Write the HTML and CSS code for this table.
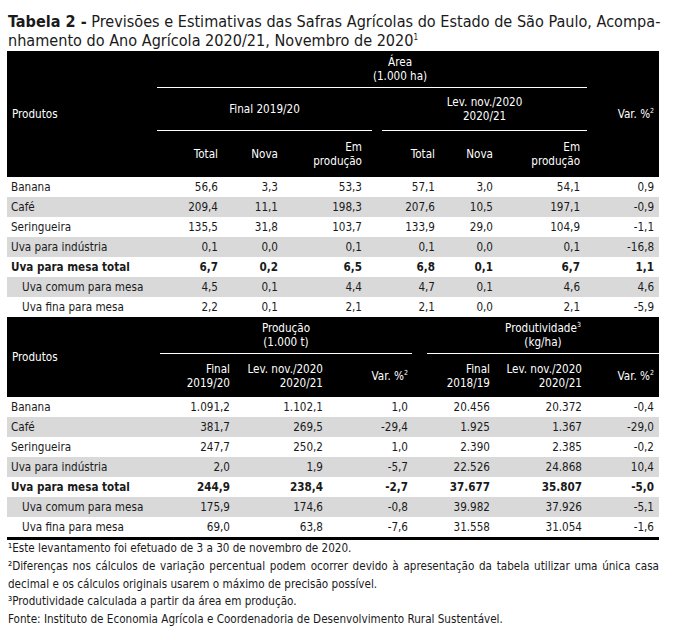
FILE: index.html
```html
<!DOCTYPE html>
<html lang="pt-BR">
<head>
<meta charset="utf-8">
<title>Tabela 2</title>
<link rel="stylesheet" href="styles.css">
</head>
<body>
<div class="page">
  <h1 class="title"><b>Tabela 2 -</b> Previsões e Estimativas das Safras Agrícolas do Estado de São Paulo, Acompa-<br>nhamento do Ano Agrícola 2020/21, Novembro de 2020<sup>1</sup></h1>

  <table class="tbl t1">
    <colgroup>
      <col class="w150"><col class="w65"><col class="w60"><col class="w90"><col class="w10"><col class="w57"><col class="w58"><col class="w90"><col class="w72">
    </colgroup>
    <thead>
      <tr class="h1">
        <th rowspan="3" class="prod">Produtos</th>
        <th colspan="7" class="grp area">Área<br>(1.000 ha)</th>
        <th rowspan="3" class="r var">Var. %<sup>2</sup></th>
      </tr>
      <tr class="h2">
        <th colspan="3" class="grp">Final 2019/20</th>
        <th class="gap"></th>
        <th colspan="3" class="grp">Lev. nov./2020<br>2020/21</th>
      </tr>
      <tr class="h3">
        <th class="r">Total</th>
        <th class="r">Nova</th>
        <th class="r p10">Em<br>produção</th>
        <th class="gap"></th>
        <th class="r">Total</th>
        <th class="r">Nova</th>
        <th class="r p7">Em<br>produção</th>
      </tr>
    </thead>
    <tbody>
      <tr><td>Banana</td><td class="r">56,6</td><td class="r">3,3</td><td class="r p10">53,3</td><td></td><td class="r">57,1</td><td class="r">3,0</td><td class="r p7">54,1</td><td class="r var">0,9</td></tr>
      <tr class="alt"><td>Café</td><td class="r">209,4</td><td class="r">11,1</td><td class="r p10">198,3</td><td></td><td class="r">207,6</td><td class="r">10,5</td><td class="r p7">197,1</td><td class="r var">-0,9</td></tr>
      <tr><td>Seringueira</td><td class="r">135,5</td><td class="r">31,8</td><td class="r p10">103,7</td><td></td><td class="r">133,9</td><td class="r">29,0</td><td class="r p7">104,9</td><td class="r var">-1,1</td></tr>
      <tr class="alt"><td>Uva para indústria</td><td class="r">0,1</td><td class="r">0,0</td><td class="r p10">0,1</td><td></td><td class="r">0,1</td><td class="r">0,0</td><td class="r p7">0,1</td><td class="r var">-16,8</td></tr>
      <tr class="bold"><td>Uva para mesa total</td><td class="r">6,7</td><td class="r">0,2</td><td class="r p10">6,5</td><td></td><td class="r">6,8</td><td class="r">0,1</td><td class="r p7">6,7</td><td class="r var">1,1</td></tr>
      <tr class="alt"><td class="ind">Uva comum para mesa</td><td class="r">4,5</td><td class="r">0,1</td><td class="r p10">4,4</td><td></td><td class="r">4,7</td><td class="r">0,1</td><td class="r p7">4,6</td><td class="r var">4,6</td></tr>
      <tr><td class="ind">Uva fina para mesa</td><td class="r">2,2</td><td class="r">0,1</td><td class="r p10">2,1</td><td></td><td class="r">2,1</td><td class="r">0,0</td><td class="r p7">2,1</td><td class="r var">-5,9</td></tr>
    </tbody>
  </table>

  <table class="tbl t2">
    <colgroup>
      <col class="w153"><col class="w74"><col class="w93"><col class="w85"><col class="w15"><col class="w67"><col class="w92"><col class="w73">
    </colgroup>
    <thead>
      <tr class="k1">
        <th rowspan="2" class="prod">Produtos</th>
        <th colspan="3" class="grp">Produção<br>(1.000 t)</th>
        <th class="gap"></th>
        <th colspan="3" class="grp">Produtividade<sup>3</sup><br>(kg/ha)</th>
      </tr>
      <tr class="k2">
        <th class="r">Final<br>2019/20</th>
        <th class="r">Lev. nov./2020<br>2020/21</th>
        <th class="r">Var. %<sup>2</sup></th>
        <th class="gap"></th>
        <th class="r">Final<br>2018/19</th>
        <th class="r">Lev. nov./2020<br>2020/21</th>
        <th class="r var">Var. %<sup>2</sup></th>
      </tr>
    </thead>
    <tbody>
      <tr><td>Banana</td><td class="r">1.091,2</td><td class="r">1.102,1</td><td class="r">1,0</td><td></td><td class="r">20.456</td><td class="r">20.372</td><td class="r var">-0,4</td></tr>
      <tr class="alt"><td>Café</td><td class="r">381,7</td><td class="r">269,5</td><td class="r">-29,4</td><td></td><td class="r">1.925</td><td class="r">1.367</td><td class="r var">-29,0</td></tr>
      <tr><td>Seringueira</td><td class="r">247,7</td><td class="r">250,2</td><td class="r">1,0</td><td></td><td class="r">2.390</td><td class="r">2.385</td><td class="r var">-0,2</td></tr>
      <tr class="alt"><td>Uva para indústria</td><td class="r">2,0</td><td class="r">1,9</td><td class="r">-5,7</td><td></td><td class="r">22.526</td><td class="r">24.868</td><td class="r var">10,4</td></tr>
      <tr class="bold"><td>Uva para mesa total</td><td class="r">244,9</td><td class="r">238,4</td><td class="r">-2,7</td><td></td><td class="r">37.677</td><td class="r">35.807</td><td class="r var">-5,0</td></tr>
      <tr class="alt"><td class="ind">Uva comum para mesa</td><td class="r">175,9</td><td class="r">174,6</td><td class="r">-0,8</td><td></td><td class="r">39.982</td><td class="r">37.926</td><td class="r var">-5,1</td></tr>
      <tr><td class="ind">Uva fina para mesa</td><td class="r">69,0</td><td class="r">63,8</td><td class="r">-7,6</td><td></td><td class="r">31.558</td><td class="r">31.054</td><td class="r var">-1,6</td></tr>
    </tbody>
  </table>

  <div class="notes">
    <p>¹Este levantamento foi efetuado de 3 a 30 de novembro de 2020.</p>
    <p>²Diferenças nos cálculos de variação percentual podem ocorrer devido à apresentação da tabela utilizar uma única casa decimal e os cálculos originais usarem o máximo de precisão possível.</p>
    <p>³Produtividade calculada a partir da área em produção.</p>
    <p>Fonte: Instituto de Economia Agrícola e Coordenadoria de Desenvolvimento Rural Sustentável.</p>
  </div>
</div>
</body>
</html>
```

FILE: styles.css
```css
html, body {
  margin: 0;
  padding: 0;
  background: #ffffff;
}

body {
  font-family: "DejaVu Sans Condensed", "DejaVu Sans", sans-serif;
  color: #1a1a1a;
}

.page {
  width: 652px;
  padding: 12px 0 0 7px;
}

.title {
  margin: 0 0 1px 1px;
  font-size: 16.1px;
  line-height: 19px;
  font-weight: normal;
  color: #1a1a1a;
  white-space: nowrap;
}

.title b {
  font-weight: bold;
}

.title sup {
  font-size: 8px;
  line-height: 0;
  vertical-align: 6px;
}

.tbl {
  width: 652px;
  table-layout: fixed;
  border-collapse: separate;
  border-spacing: 0;
  font-size: 11.6px;
}

.w150 { width: 150px; }
.w65 { width: 65px; }
.w60 { width: 60px; }
.w90 { width: 90px; }
.w10 { width: 10px; }
.w57 { width: 57px; }
.w58 { width: 58px; }
.w72 { width: 72px; }
.w153 { width: 153px; }
.w74 { width: 74px; }
.w93 { width: 93px; }
.w85 { width: 85px; }
.w15 { width: 15px; }
.w67 { width: 67px; }
.w92 { width: 92px; }
.w73 { width: 73px; }

.tbl th {
  background: #000000;
  color: #ffffff;
  font-weight: normal;
  line-height: 14px;
  padding: 0 4px;
  vertical-align: middle;
  white-space: nowrap;
}

.tbl th.prod {
  text-align: left;
  padding-left: 5px;
}

.tbl th.grp {
  text-align: center;
  border-bottom: 1px solid #ffffff;
}

.tbl th.area {
  padding-left: 60px;
}

.tbl th.gap {
  padding: 0;
}

.tbl sup {
  font-size: 7px;
  line-height: 0;
  vertical-align: 5px;
}

.t1 .h1 th { height: 36px; }
.t1 .h2 th { height: 42px; }
.t1 .h3 th { height: 46px; }

.t2 .k1 th { height: 36px; }
.t2 .k2 th { height: 43px; }

.tbl td {
  height: 20px;
  padding: 0 4px;
  line-height: 14px;
  white-space: nowrap;
  vertical-align: middle;
}

.tbl .r { text-align: right; }
.tbl .p10 { padding-right: 10px; }
.tbl .p7 { padding-right: 7px; }
.tbl .var { padding-right: 5px; }

.tbl td.ind { padding-left: 15px; }

.tbl tr.alt td { background: #d9d9d9; }
.tbl tr.bold td { font-weight: bold; }

.t2 tbody tr:last-child td {
  border-bottom: 3px solid #000000;
}

.notes {
  margin-top: 0;
  font-size: 11.6px;
  line-height: 17.8px;
  color: #1a1a1a;
}

.notes p {
  margin: 0 0 0 1px;
  text-align: justify;
}
```
